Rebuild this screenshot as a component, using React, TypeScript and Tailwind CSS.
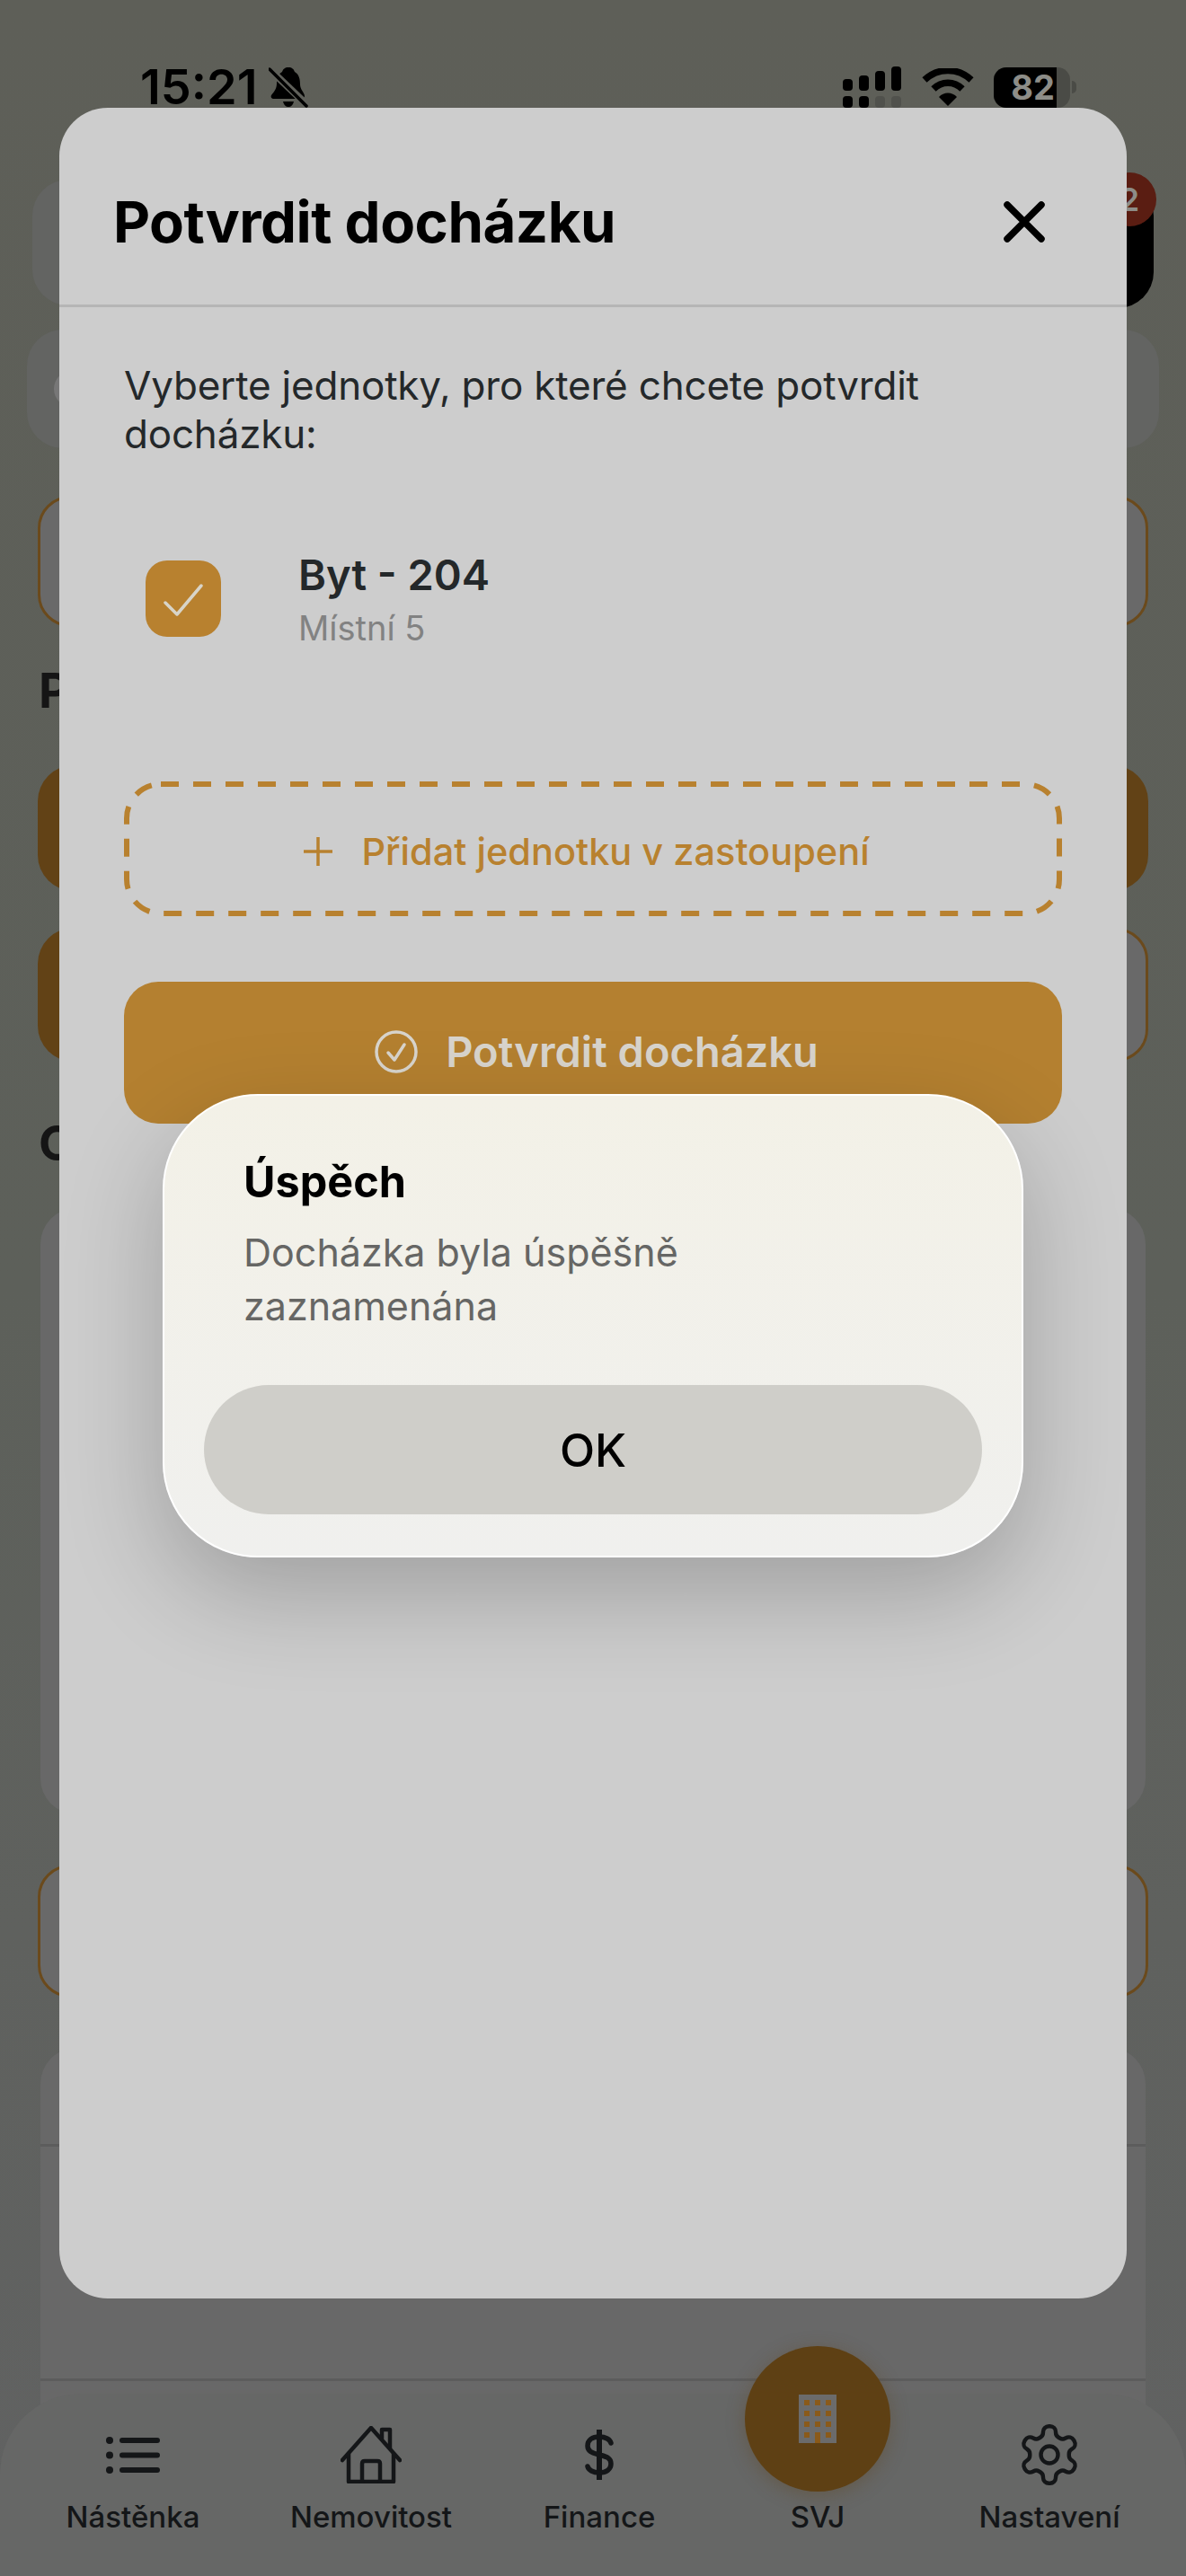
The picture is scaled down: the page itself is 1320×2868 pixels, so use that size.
import React from "react";

const font = { fontFamily: "Inter, 'Noto Sans', sans-serif" };

function ListIcon() {
  return (
    <svg width="60" height="41" viewBox="0 0 60 41" fill="none" className="text-[#141618]">
      <circle cx="4" cy="4" r="4" fill="currentColor" />
      <circle cx="4" cy="20.500" r="4" fill="currentColor" />
      <circle cx="4" cy="37" r="4" fill="currentColor" />
      <path d="M18 4H57M18 20.500H57M18 37H57" stroke="currentColor" strokeWidth="6" strokeLinecap="round" />
    </svg>
  );
}

function HomeIcon() {
  return (
    <svg width="68" height="64" viewBox="0 0 68 64" fill="none" stroke="#141618" strokeWidth="4.500" strokeLinecap="round" strokeLinejoin="round">
      <path d="M2 38L34 2L66 38" />
      <path d="M46 14V4H55V25" />
      <path d="M9 31V62H59V31" />
      <path d="M24 62V42C24 40 25 39 27 39H41C43 39 44 40 44 42V62" />
    </svg>
  );
}

function DollarIcon() {
  return (
    <svg width="32" height="56" viewBox="0 0 32 56" fill="none" stroke="#141618">
      <path d="M16 0V56" strokeWidth="6" />
      <path d="M29 15C28 11 23 8 16 8C8 8 3 12 3 18C3 25 9 26 16 28C23 30 29 31 29 38C29 44 24 48 16 48C9 48 4 45 3 41" strokeWidth="5.500" strokeLinecap="round" />
    </svg>
  );
}

function GearIcon() {
  return (
    <svg width="76" height="78" viewBox="0 0 24 24" fill="none" stroke="#141618" strokeWidth="1.400" strokeLinecap="round" strokeLinejoin="round">
      <path d="M12.220 2h-.440a2 2 0 0 0-2 2v.180a2 2 0 0 1-1 1.730l-.430.250a2 2 0 0 1-2 0l-.150-.080a2 2 0 0 0-2.730.730l-.220.380a2 2 0 0 0 .730 2.730l.150.100a2 2 0 0 1 1 1.720v.510a2 2 0 0 1-1 1.740l-.150.090a2 2 0 0 0-.730 2.730l.220.380a2 2 0 0 0 2.730.730l.150-.080a2 2 0 0 1 2 0l.430.250a2 2 0 0 1 1 1.730V20a2 2 0 0 0 2 2h.440a2 2 0 0 0 2-2v-.180a2 2 0 0 1 1-1.730l.430-.250a2 2 0 0 1 2 0l.150.080a2 2 0 0 0 2.730-.730l.220-.390a2 2 0 0 0-.730-2.730l-.150-.080a2 2 0 0 1-1-1.740v-.500a2 2 0 0 1 1-1.740l.150-.090a2 2 0 0 0 .730-2.730l-.220-.380a2 2 0 0 0-2.730-.730l-.150.080a2 2 0 0 1-2 0l-.430-.250a2 2 0 0 1-1-1.730V4a2 2 0 0 0-2-2z" />
      <circle cx="12" cy="12" r="3" />
    </svg>
  );
}

function BuildingIcon() {
  const wins = [];
  for (let r = 0; r < 3; r++) {
    for (let c = 0; c < 3; c++) {
      wins.push(<rect key={`${r}-${c}`} x={6 + c * 12} y={6 + r * 12} width="6" height="6" fill="#8a5a1a" />);
    }
  }
  return (
    <svg width="42" height="54" viewBox="0 0 42 54">
      <rect width="42" height="54" fill="#6b6b6b" />
      {wins}
      <rect x="6" y="42" width="6" height="6" fill="#8a5a1a" />
      <rect x="30" y="42" width="6" height="6" fill="#8a5a1a" />
      <rect x="18" y="42" width="6" height="12" fill="#8a5a1a" />
    </svg>
  );
}

function BellSlash() {
  return (
    <svg width="44" height="46" viewBox="0 0 44 46">
      <path d="M22 1C26 1 28 3 29 6C34 9 35 14 35 20C35 26 40 29 40 33C40 35 38 36 36 36H6C3 36 2 34 3 32C6 28 9 25 9 19C9 13 11 8 15 6C16 3 18 1 22 1Z" fill="#000" />
      <path d="M16 39H28C27 43 25 45 22 45C19 45 17 43 16 39Z" fill="#000" />
      <path d="M3 5L43 43" stroke="#5f605a" strokeWidth="8" />
      <path d="M1 3L42 44" stroke="#000" strokeWidth="3.500" strokeLinecap="round" />
    </svg>
  );
}

function Signal() {
  return (
    <svg width="66" height="46" viewBox="0 0 66 46">
      <rect x="0" y="14" width="11" height="13" rx="4" fill="#000" />
      <rect x="18" y="10" width="11" height="17" rx="4" fill="#000" />
      <rect x="36" y="5" width="11" height="22" rx="4" fill="#000" />
      <rect x="54" y="0" width="11" height="27" rx="4" fill="#000" />
      <rect x="0" y="33" width="11" height="13" rx="4" fill="#000" />
      <rect x="18" y="33" width="11" height="13" rx="4" fill="#000" />
      <rect x="36" y="33" width="11" height="13" rx="4" fill="#50514c" />
      <rect x="54" y="33" width="11" height="13" rx="4" fill="#50514c" />
    </svg>
  );
}

function Wifi() {
  return (
    <svg width="58" height="42" viewBox="0 0 58 42" fill="none">
      <path d="M3 13C18 -1 40 -1 55 13" stroke="#000" strokeWidth="7.500" />
      <path d="M13 23C22 14 36 14 45 23" stroke="#000" strokeWidth="7.500" />
      <path d="M19 32C24 26 34 26 39 32L29 42Z" fill="#000" />
    </svg>
  );
}

function Battery() {
  return (
    <div className="flex items-center gap-[2px]">
      <div className="relative h-[45px] w-[85px] overflow-hidden rounded-[14px] bg-[#4a4b46]">
        <div className="flex h-full w-[70px] items-center justify-end bg-black pr-[2px] text-[38px] leading-[45px] font-bold text-[#8d8d88]">82</div>
      </div>
      <div className="h-[14px] w-[5px] rounded-r-full bg-[#4a4b46]" />
    </div>
  );
}

function NavItem({ icon, label, center }: { icon: React.ReactNode; label: string; center: number }) {
  return (
    <div className="absolute top-[30px] flex w-[220px] flex-col items-center" style={{ left: center - 110 }}>
      <div className="flex h-[76px] items-center justify-center">{icon}</div>
      <div className="mt-[8px] text-[33px] leading-[46px] font-medium text-[#141618]">{label}</div>
    </div>
  );
}

export default function App() {
  return (
    <div style={font} className="relative h-[2868px] w-[1320px] overflow-hidden bg-linear-to-b from-[#5e5f58] via-[#5d605a] to-[#616262]">
      {/* Dimmed page underneath */}
      <div className="flex items-center justify-between pt-[74px] pr-[122px] pl-[156px]">
        <div className="flex items-center gap-[12px]">
          <span className="text-[54px] leading-[46px] font-semibold text-black">15:21</span>
          <BellSlash />
        </div>
        <div className="flex items-center gap-[22px]">
          <Signal />
          <Wifi />
          <Battery />
        </div>
      </div>

      <div className="mt-[80px] ml-[36px] flex h-[140px] w-[1248px] items-start gap-[20px]">
        <div className="h-full flex-1 rounded-[40px] bg-[#636462]" />
        <div className="relative h-[143px] w-[150px] rounded-[40px] bg-black">
          <div className="absolute top-[-8px] right-[-3px] flex h-[60px] w-[60px] items-center justify-center rounded-full bg-[#5a1d12] text-[36px] font-semibold text-[#8d8d88]">2</div>
        </div>
      </div>

      <div className="relative mt-[27px] ml-[30px] h-[132px] w-[1260px] rounded-[40px] bg-[#636462]">
        <div className="absolute top-[46px] left-[30px] flex h-[40px] w-[40px] items-center justify-center rounded-full bg-[#777]">
          <svg width="16" height="20" viewBox="0 0 16 20">
            <path d="M14 0V20L0 10Z" fill="#4c4c4c" />
          </svg>
        </div>
      </div>

      <div className="mt-[53px] ml-[42px] h-[146px] w-[1236px] rounded-[36px] border-[3px] border-[#6b4a1c] bg-[#696969]" />

      <div className="mt-[44px] ml-[43px] text-[54px] leading-[54px] font-bold text-[#151515]">Potvrzení</div>

      <div className="mt-[56px] ml-[42px] h-[140px] w-[1236px] rounded-[40px] bg-[#624216]" />

      <div className="mt-[41px] ml-[42px] flex h-[149px] w-[1236px] gap-[20px]">
        <div className="flex-1 rounded-[40px] bg-[#624216]" />
        <div className="flex-1 rounded-[36px] border-[3px] border-[#6b4a1c] bg-[#696969]" />
      </div>

      <div className="mt-[64px] ml-[43px] text-[54px] leading-[54px] font-bold text-[#151515]">Oznámení</div>

      <div className="mt-[45px] ml-[45px] h-[675px] w-[1230px] rounded-[40px] bg-[#686868]" />

      <div className="mt-[56px] ml-[42px] h-[148px] w-[1236px] rounded-[36px] border-[3px] border-[#6b4a1c] bg-[#696969]" />

      <div className="mt-[56px] ml-[45px] h-[588px] w-[1230px] rounded-t-[40px] bg-[#686868]">
        <div className="h-[110px] border-b-[3px] border-[#5c5c5c]" />
        <div className="h-[261px] border-b-[3px] border-[#5c5c5c]" />
      </div>

      {/* Bottom navigation */}
      <div className="absolute top-[2665px] left-0 h-[203px] w-[1320px] rounded-t-[90px] bg-[#666766]">
        <NavItem icon={<ListIcon />} label="Nástěnka" center={148} />
        <NavItem icon={<HomeIcon />} label="Nemovitost" center={413} />
        <NavItem icon={<DollarIcon />} label="Finance" center={667} />
        <NavItem icon={<div className="h-[76px]" />} label="SVJ" center={910} />
        <NavItem icon={<GearIcon />} label="Nastavení" center={1168} />
        <div className="absolute top-[-53px] left-[829px] flex h-[162px] w-[162px] items-center justify-center rounded-full bg-[#5e4014] shadow-[0_4px_20px_rgba(94,64,20,0.35)]">
          <BuildingIcon />
        </div>
      </div>

      {/* Attendance modal */}
      <div className="absolute top-[120px] left-[66px] h-[2439px] w-[1188px] rounded-[54px] bg-[#cdcdcd]">
        <div className="flex h-[222px] items-center justify-between border-b-[3px] border-[#b5b5b5] pt-[34px] pr-[91px] pl-[60px]">
          <div className="text-[63.500px] leading-[74px] font-bold tracking-[-0.5px] text-black">Potvrdit docházku</div>
          <svg width="46" height="46" viewBox="0 0 46 46" fill="none" stroke="#000" strokeWidth="7.500" strokeLinecap="round">
            <path d="M4 4L42 42M42 4L4 42" />
          </svg>
        </div>

        <div className="flex flex-col px-[72px]">
          <div className="mt-[60px] w-[1000px] text-[44px] leading-[54px] tracking-[-0.2px] text-[#24282a]">
            Vyberte jednotky, pro které chcete potvrdit docházku:
          </div>

          <div className="mt-[94px] flex items-start pl-[24px]">
            <div className="mt-[20px] flex h-[85px] w-[84px] items-center justify-center rounded-[24px] bg-[#b8812f]">
              <svg width="44" height="38" viewBox="0 0 44 38" fill="none" stroke="#d8d4c8" strokeWidth="3.500" strokeLinecap="round" strokeLinejoin="round">
                <path d="M2 23L15 36L42 4" />
              </svg>
            </div>
            <div className="ml-[86px] flex flex-col pt-[7px]">
              <div className="text-[47px] leading-[58px] font-semibold text-[#24282a]">Byt - 204</div>
              <div className="mt-[4px] text-[38px] leading-[52px] text-[#828282]">Místní 5</div>
            </div>
          </div>

          <div className="relative mt-[145px] flex h-[150px] w-[1044px] items-center justify-center gap-[32px] pt-[6px] pr-[14px]">
            <svg className="absolute inset-0" width="1044" height="150" fill="none">
              <rect x="3" y="3" width="1038" height="144" rx="38" stroke="#b8812f" strokeWidth="6" strokeDasharray="20 16" />
            </svg>
            <svg width="32" height="32" viewBox="0 0 32 32" fill="none" stroke="#b8812f" strokeWidth="3.500">
              <path d="M16 0V32M0 16H32" />
            </svg>
            <div className="text-[41.500px] leading-[54px] font-medium text-[#b8812f]">Přidat jednotku v zastoupení</div>
          </div>

          <div className="mt-[73px] flex h-[158px] w-[1044px] items-center justify-center gap-[31px] rounded-[38px] bg-[#b48030] pb-[2px] pl-[8px]">
            <svg width="48" height="48" viewBox="0 0 48 48" fill="none" stroke="#d8d4cc" strokeWidth="3.500" strokeLinecap="round" strokeLinejoin="round">
              <circle cx="24" cy="24" r="22" />
              <path d="M15 25L22 33L33 16" />
            </svg>
            <div className="text-[47px] leading-[54px] font-semibold text-[#d8d4cc]">Potvrdit docházku</div>
          </div>
        </div>
      </div>

      {/* Success alert */}
      <div className="absolute top-[1218px] left-[181px] flex h-[516px] w-[958px] flex-col rounded-[106px] border-[2px] border-white bg-linear-to-b from-[#f3f1e7] to-[#f0f0ee] pr-[44px] pl-[44px] shadow-[0_40px_110px_rgba(0,0,0,0.22)]">
        <div className="mt-[65px] pl-[44px] text-[48.500px] leading-[62px] font-bold text-black">Úspěch</div>
        <div className="mt-[17px] w-[700px] pl-[44px] text-[43px] leading-[60px] text-[#666664]">Docházka byla úspěšně zaznamenána</div>
        <div className="mt-[58px] flex h-[144px] w-[866px] items-center justify-center rounded-[72px] bg-[#cfcec9] pt-[3px] text-[51px] font-medium text-black">OK</div>
      </div>
    </div>
  );
}
